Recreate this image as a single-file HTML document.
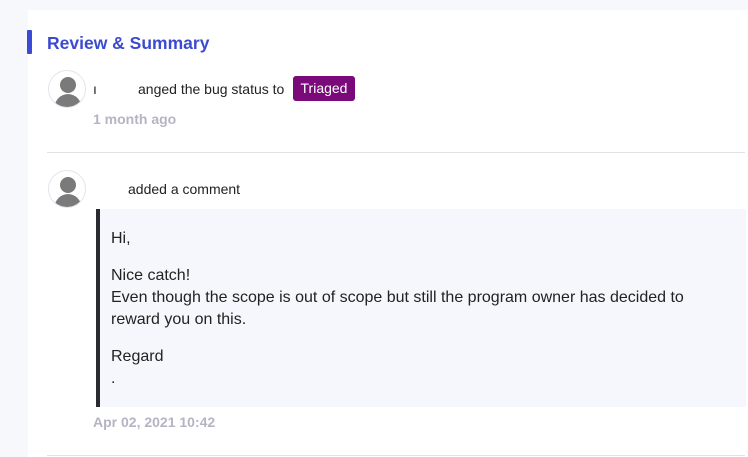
<!DOCTYPE html><html><head><style>
body{margin:0;width:748px;height:457px;background:#f7f8fc;font-family:"Liberation Sans",sans-serif;position:relative;overflow:hidden}
.card{position:absolute;left:28px;top:10px;width:720px;height:447px;background:#fff}
.a{position:absolute;white-space:nowrap}
.av{position:absolute;width:36px;height:36px;border-radius:50%;border:1px solid #e4e4ee;overflow:hidden;background:#fff}
</style></head><body>
<div class="card"></div>
<div class="a" style="left:27px;top:30px;width:5px;height:24px;background:#3b4bd8;border-radius:1px"></div>
<div class="a" style="left:47px;top:33px;font-size:17.5px;font-weight:bold;color:#3b4bd0">Review &amp; Summary</div>
<div class="av" style="left:48px;top:70px"><svg width="36" height="36"><circle cx="19" cy="14" r="8" fill="#7a7a7a"/><path d="M5 37 Q7 24 19 23 Q31 24 33 37Z" fill="#7a7a7a"/></svg></div>
<div class="a" style="left:93px;top:81px;font-size:14px;color:#222">ı</div>
<div class="a" style="left:138px;top:81px;font-size:14px;color:#222">anged the bug status to</div>
<div class="a" style="left:293px;top:76px;width:62px;height:25px;background:#7a0a7a;border-radius:3px;color:#fff;font-size:14px;line-height:25px;text-align:center">Triaged</div>
<div class="a" style="left:93px;top:111px;font-size:14px;font-weight:bold;color:#b4b4c4">1 month ago</div>
<div class="a" style="left:47px;top:152px;width:698px;height:1px;background:#e2e2e6"></div>
<div class="av" style="left:48px;top:170px"><svg width="36" height="36"><circle cx="19" cy="14" r="8" fill="#7a7a7a"/><path d="M5 37 Q7 24 19 23 Q31 24 33 37Z" fill="#7a7a7a"/></svg></div>
<div class="a" style="left:128px;top:181px;font-size:14px;color:#222">added a comment</div>
<div class="a" style="left:96px;top:209px;width:646px;height:198px;background:#f6f7fc;border-left:4px solid #2a2a30"></div>
<div class="a" style="left:111px;top:228px;font-size:16px;color:#222;line-height:22px">Hi,</div>
<div class="a" style="left:111px;top:265px;font-size:16px;color:#222;line-height:22px">Nice catch!<br>Even though the scope is out of scope but still the program owner has decided to<br>reward you on this.</div>
<div class="a" style="left:111px;top:346px;font-size:16px;color:#222;line-height:22px">Regard<br>.</div>
<div class="a" style="left:93px;top:414px;font-size:14px;font-weight:bold;color:#b4b4c4">Apr 02, 2021 10:42</div>
<div class="a" style="left:47px;top:455px;width:698px;height:1px;background:#e2e2e6"></div>
</body></html>
